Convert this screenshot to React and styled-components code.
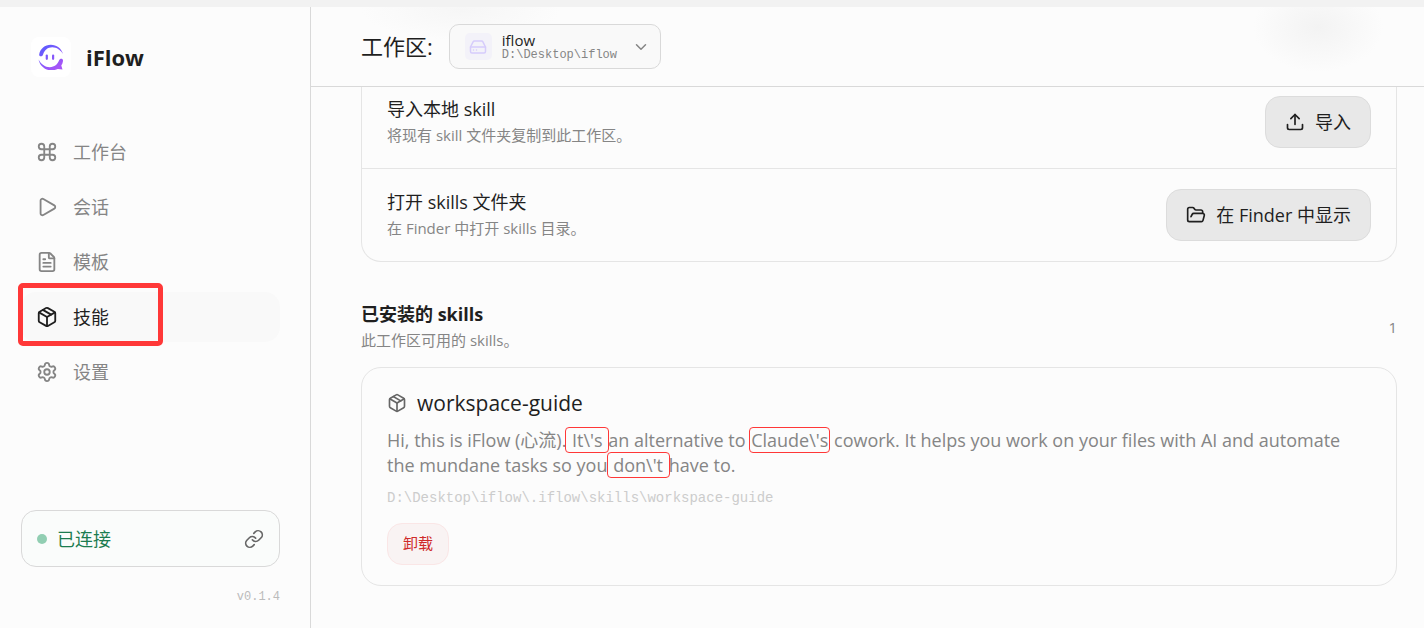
import React from 'react';
import styled, { createGlobalStyle } from 'styled-components';
import {
  ChevronDown,
  Command,
  FileText,
  FolderOpen,
  HardDrive,
  Link,
  Package,
  Play,
  Settings,
  Upload,
} from 'lucide-react';

const navList = [
  { icon: Command, label: '工作台' },
  { icon: Play, label: '会话' },
  { icon: FileText, label: '模板' },
  { icon: Package, label: '技能', active: true },
  { icon: Settings, label: '设置' },
];

const Logo = () => (
  <svg width="26" height="26" viewBox="0 0 26 26" fill="none" aria-hidden="true">
    <defs>
      <linearGradient id="logo" x1="4" y1="2" x2="20" y2="24" gradientUnits="userSpaceOnUse">
        <stop stopColor="#5b5cff" />
        <stop offset="1" stopColor="#a855f7" />
      </linearGradient>
    </defs>
    <g fill="url(#logo)">
      <path d="M1.200 10.500C2 4.800 7 .8 12.800.8c5.800 0 10.700 3.700 12.200 9.200C22.600 6 18.700 3.200 14.300 3.200 9.800 3.200 6.400 6 5.200 10.200 4.300 13.200.8 12.800 1.200 10.500z" />
      <path d="M.6 15.500c2.400 4.600 6.400 7.700 11.200 7.700 4.700 0 7.900-2.900 9.200-6.600.9-2.600 4.300-2.200 4 .4-.2 1.800-.8 3.300-1.700 4.600l1.200 3.800-4.700-.4c-2 1-4.300 1.300-6.600 1.300C7 26.300 1.800 21.800.6 15.500z" />
      <rect x="7.700" y="10.500" width="2.200" height="5.400" rx="1.100" />
      <rect x="14" y="10.500" width="2.200" height="5.400" rx="1.100" />
    </g>
  </svg>
);

const App = () => {
  return (
    <>
      <GlobalStyle />
      <Page>
        <Sidebar>
          <Brand>
            <LogoBox>
              <Logo />
            </LogoBox>
            <BrandName>iFlow</BrandName>
          </Brand>
          <Nav>
            {navList.map(({ icon: Icon, label, active }) => (
              <NavItem key={label} href="#" $active={active}>
                <Icon size={22} />
                <Label>{label}</Label>
                {active && <Marker />}
              </NavItem>
            ))}
          </Nav>
          <Status type="button">
            <Dot />
            <StatusText>已连接</StatusText>
            <Link size={20} />
          </Status>
          <Version>v0.1.4</Version>
        </Sidebar>
        <Main>
          <Header>
            <HeaderTitle>工作区:</HeaderTitle>
            <Picker type="button">
              <DriveBox>
                <HardDrive size={18} />
              </DriveBox>
              <PickerText>
                <PickerName>iflow</PickerName>
                <PickerPath>D:\Desktop\iflow</PickerPath>
              </PickerText>
              <ChevronDown size={18} />
            </Picker>
          </Header>
          <Content>
            <Actions>
              <ActionRow>
                <div>
                  <Title>导入本地 skill</Title>
                  <Hint>将现有 skill 文件夹复制到此工作区。</Hint>
                </div>
                <Button type="button">
                  <Upload size={20} />
                  <Label>导入</Label>
                </Button>
              </ActionRow>
              <ActionRow>
                <div>
                  <Title>打开 skills 文件夹</Title>
                  <Hint>在 Finder 中打开 skills 目录。</Hint>
                </div>
                <Button type="button">
                  <FolderOpen size={20} />
                  <Label>在 Finder 中显示</Label>
                </Button>
              </ActionRow>
            </Actions>
            <SectionHead>
              <div>
                <Title as="h2" $bold>已安装的 skills</Title>
                <Hint>此工作区可用的 skills。</Hint>
              </div>
              <Count>1</Count>
            </SectionHead>
            <SkillCard>
              <SkillName>
                <Package size={20} />
                workspace-guide
              </SkillName>
              <Desc>
                Hi, this is iFlow (心流).<Mark> It\'s </Mark>an alternative to <Mark>Claude\'s</Mark> cowork. It helps
                you work on your files with AI and automate the mundane tasks so you<Mark> don\'t </Mark>have to.
              </Desc>
              <SkillPath>D:\Desktop\iflow\.iflow\skills\workspace-guide</SkillPath>
              <Remove type="button">卸载</Remove>
            </SkillCard>
          </Content>
        </Main>
      </Page>
    </>
  );
};

const GlobalStyle = createGlobalStyle`
  * {
    box-sizing: border-box;
  }
  body {
    margin: 0;
    background: #fcfcfc;
    color: #1f1f1f;
    font-family: "Open Sans", "Noto Sans CJK SC", sans-serif;
  }
  button {
    font-family: inherit;
    cursor: pointer;
  }
  h1, h2, h3, p {
    margin: 0;
  }
`;
const mono = `"Liberation Mono", "Noto Sans CJK SC", monospace`;

const Page = styled.div`
  display: flex;
  min-height: 100vh;
  border-top: 7px solid #f2f2f2;
`;
const Sidebar = styled.aside`
  display: flex;
  flex-direction: column;
  width: 311px;
  flex-shrink: 0;
  padding: 30px 30px 22px 21px;
  border-right: 1px solid #d9d9d9;
`;
const Brand = styled.div`
  display: flex;
  align-items: center;
  gap: 15px;
  padding-left: 10px;
`;
const LogoBox = styled.div`
  display: flex;
  align-items: center;
  justify-content: center;
  width: 40px;
  height: 40px;
  border-radius: 8px;
  background: #fff;
`;
const BrandName = styled.h1`
  font-size: 22px;
  line-height: 32px;
  font-weight: 700;
`;
const Nav = styled.nav`
  display: flex;
  flex-direction: column;
  gap: 5px;
  margin-top: 50px;
`;
const NavItem = styled.a`
  position: relative;
  display: flex;
  align-items: center;
  gap: 15px;
  height: 50px;
  padding: 0 15px;
  border-radius: 15px;
  text-decoration: none;
  color: ${(props) => (props.$active ? '#1f1f1f' : '#858585')};
  background: ${(props) => (props.$active ? '#f9f9f9' : 'transparent')};
`;
const Label = styled.span`
  font-size: 18px;
  line-height: 26px;
`;
const Marker = styled.span`
  position: absolute;
  top: -9px;
  left: -3px;
  width: 145px;
  height: 63px;
  border: 5px solid #ff3838;
  border-radius: 5px;
`;
const Status = styled.button`
  display: flex;
  align-items: center;
  gap: 10px;
  height: 57px;
  margin-top: auto;
  padding: 0 15px;
  border: 1px solid #d9d9d9;
  border-radius: 15px;
  background: #fafcfb;
  color: #666;
`;
const Dot = styled.span`
  width: 10px;
  height: 10px;
  border-radius: 50%;
  background: #91ceb2;
`;
const StatusText = styled(Label)`
  flex: 1;
  text-align: left;
  color: #1c7c50;
`;
const Version = styled.div`
  margin-top: 22px;
  text-align: right;
  font-family: ${mono};
  font-size: 12px;
  line-height: 17px;
  color: #bbb;
`;
const Main = styled.main`
  display: flex;
  flex-direction: column;
  flex: 1;
  min-width: 0;
`;
const Header = styled.header`
  display: flex;
  align-items: center;
  gap: 16px;
  height: 80px;
  padding: 0 50px;
  border-bottom: 1px solid #d9d9d9;
  background:
    radial-gradient(ellipse 65px 45px at calc(100% - 106px) 20px, #f3f3f3, transparent),
    radial-gradient(ellipse 100px 30px at 150px 3px, #f6f6f6, transparent);
`;
const HeaderTitle = styled.h2`
  padding-bottom: 2px;
  font-size: 22px;
  line-height: 32px;
  font-weight: 400;
`;
const Picker = styled.button`
  display: flex;
  align-items: center;
  gap: 10px;
  width: 212px;
  height: 45px;
  padding: 0 10px 0 15px;
  border: 1px solid #d9d9d9;
  border-radius: 10px;
  background: #f9f9f9;
  color: #858585;
`;
const DriveBox = styled.span`
  display: flex;
  align-items: center;
  justify-content: center;
  width: 27px;
  height: 27px;
  border-radius: 5px;
  background: #f3f2f9;
  color: #d6ccfb;
`;
const PickerText = styled.span`
  display: flex;
  flex-direction: column;
  flex: 1;
  text-align: left;
`;
const PickerName = styled.span`
  font-size: 15px;
  line-height: 16px;
  color: #1f1f1f;
`;
const PickerPath = styled.span`
  font-family: ${mono};
  font-size: 12px;
  line-height: 14px;
`;
const Content = styled.div`
  padding: 0 27px 40px 50px;
`;
const Actions = styled.section`
  border: 1px solid #e5e5e5;
  border-top: 0;
  border-radius: 0 0 20px 20px;
`;
const ActionRow = styled.div`
  display: flex;
  align-items: center;
  justify-content: space-between;
  padding: 20px 25px;

  &:first-child {
    padding-top: 9px;
    border-bottom: 1px solid #e5e5e5;
  }
`;
const Title = styled.h3`
  font-size: 18px;
  line-height: 26px;
  font-weight: ${(props) => (props.$bold ? 700 : 400)};
`;
const Hint = styled.p`
  font-size: 15px;
  line-height: 26px;
  color: #858585;
`;
const Button = styled.button`
  display: flex;
  align-items: center;
  gap: 10px;
  height: 52px;
  padding: 0 19px;
  border: 1px solid #dcdcdc;
  border-radius: 15px;
  background: #e8e8e8;
  color: #1f1f1f;
`;
const SectionHead = styled.div`
  display: flex;
  align-items: center;
  justify-content: space-between;
  margin-top: 39px;
`;
const Count = styled.span`
  font-size: 15px;
  color: #858585;
`;
const SkillCard = styled.article`
  margin-top: 14px;
  padding: 20px 25px;
  border: 1px solid #e5e5e5;
  border-radius: 20px;
`;
const SkillName = styled.h3`
  display: flex;
  align-items: center;
  gap: 10px;
  font-size: 21px;
  line-height: 30px;
  font-weight: 400;

  svg {
    color: #666;
  }
`;
const Desc = styled.p`
  margin-top: 10px;
  padding-right: 20px;
  font-size: 18px;
  line-height: 25px;
  color: #858585;
`;
const Mark = styled.span`
  padding: 0 1px;
  border-radius: 3px;
  outline: 1px solid #ff3838;
`;
const SkillPath = styled.p`
  margin-top: 10px;
  font-family: ${mono};
  font-size: 14px;
  line-height: 20px;
  color: #ccc;
`;
const Remove = styled.button`
  height: 42px;
  margin-top: 15px;
  padding: 0 15px 3px;
  border: 1px solid #fae6e6;
  border-radius: 15px;
  background: #f9f3f3;
  color: #cf2a2a;
  font-size: 15px;
`;

export default App;
